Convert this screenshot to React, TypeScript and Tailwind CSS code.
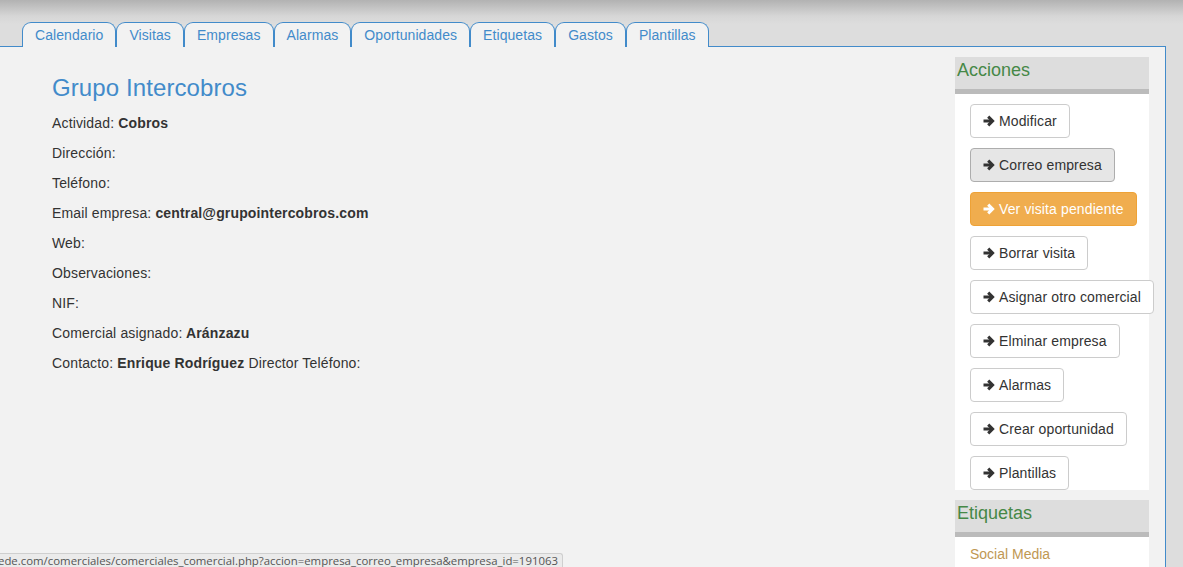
import React from "react";

const tabs = ["Calendario", "Visitas", "Empresas", "Alarmas", "Oportunidades", "Etiquetas", "Gastos", "Plantillas"];

function Arrow({ color = "#333" }: { color?: string }) {
  return (
    <svg width="12" height="12" viewBox="0 0 12 12" className="shrink-0">
      <path d="M0.5 6H9" stroke={color} strokeWidth="3" />
      <path d="M5.2 1.6L9.6 6L5.2 10.4" stroke={color} strokeWidth="3" fill="none" />
    </svg>
  );
}

type Variant = "default" | "active" | "warning";

function Btn({ label, variant = "default" }: { label: string; variant?: Variant }) {
  const cls =
    variant === "warning"
      ? "bg-[#f0ad4e] border-[#eea236] text-white"
      : variant === "active"
      ? "bg-[#e6e6e6] border-[#adadad] text-[#333]"
      : "bg-white border-[#cccccc] text-[#333]";
  return (
    <div className="mb-[10px] flex">
      <div className={`flex h-[34px] items-center gap-[4px] whitespace-nowrap rounded-[4px] border px-[12px] text-[14px] leading-5 tracking-[0.12px] ${cls}`}>
        <Arrow color={variant === "warning" ? "#ffffff" : "#333333"} />
        <span>{label}</span>
      </div>
    </div>
  );
}

function Line({ label, value, rest }: { label: string; value?: string; rest?: string }) {
  return (
    <p className="mb-[10px] text-[14px] leading-5 tracking-[0.15px] text-[#333]">
      {label}
      {value ? <b className="font-bold"> {value}</b> : null}
      {rest ? <span> {rest}</span> : null}
    </p>
  );
}

export default function App() {
  return (
    <div
      className="relative h-[567px] w-full overflow-hidden bg-[linear-gradient(to_bottom,#b2b2b2_0px,#d6d6d6_16px,#dddddd_24px,#dddddd_100%)]"
      style={{ fontFamily: '"Liberation Sans", Arial, sans-serif' }}
    >
      <div className="relative z-10 flex pl-[22px] pt-[22px]">
        {tabs.map((t) => (
          <div
            key={t}
            className="h-[25px] rounded-t-[9px] border-x border-t border-[#428bca] bg-[#f2f2f2] px-[12px] pt-[2px] text-[14px] leading-5 tracking-[0.07px] text-[#428bca]"
          >
            {t}
          </div>
        ))}
      </div>
      <div className="-mt-px flex h-[530px] w-[1166px] border-r border-t border-[#428bca] bg-[#f2f2f2]">
        <div className="flex-1 pl-[52px]">
          <h3 className="mb-[12px] mt-[28px] text-[24px] leading-[26px] tracking-[0.1px] text-[#428bca]">Grupo Intercobros</h3>
          <Line label="Actividad:" value="Cobros" />
          <Line label="Dirección:" />
          <Line label="Teléfono:" />
          <Line label="Email empresa:" value="central@grupointercobros.com" />
          <Line label="Web:" />
          <Line label="Observaciones:" />
          <Line label="NIF:" />
          <Line label="Comercial asignado:" value="Aránzazu" />
          <Line label="Contacto:" value="Enrique Rodríguez" rest="Director Teléfono:" />
        </div>
        <div className="mr-[16px] mt-[10px] w-[194px]">
          <div className="h-[32px] bg-[#dddddd] pl-[2px] pt-[1px] text-[18px] leading-[24px] text-[#468847]">Acciones</div>
          <div className="h-[5px] bg-[#bbbbbb]" />
          <div className="bg-white pl-[15px] pt-[10px]">
            <Btn label="Modificar" />
            <Btn label="Correo empresa" variant="active" />
            <Btn label="Ver visita pendiente" variant="warning" />
            <Btn label="Borrar visita" />
            <Btn label="Asignar otro comercial" />
            <Btn label="Elminar empresa" />
            <Btn label="Alarmas" />
            <Btn label="Crear oportunidad" />
            <Btn label="Plantillas" />
          </div>
          <div className="h-[32px] bg-[#dddddd] pl-[2px] pt-[1px] text-[18px] leading-[24px] text-[#468847]">Etiquetas</div>
          <div className="h-[5px] bg-[#bbbbbb]" />
          <div className="h-[60px] bg-white pl-[15px] pt-[7px] text-[14px] leading-5 text-[#c09853]">Social Media</div>
        </div>
      </div>
      <div className="absolute bottom-0 left-0 h-[14px] w-[563px] overflow-hidden rounded-tr-[3px] border-r border-t border-[#cfcfcf] bg-[#ebebeb]">
        <div
          className="-ml-[2px] whitespace-nowrap text-[11.4px] leading-[14px] text-[#555]"
          style={{ fontFamily: '"Open Sans", "DejaVu Sans", sans-serif' }}
        >
          ede.com/comerciales/comerciales_comercial.php?accion=empresa_correo_empresa&amp;empresa_id=191063
        </div>
      </div>
    </div>
  );
}
